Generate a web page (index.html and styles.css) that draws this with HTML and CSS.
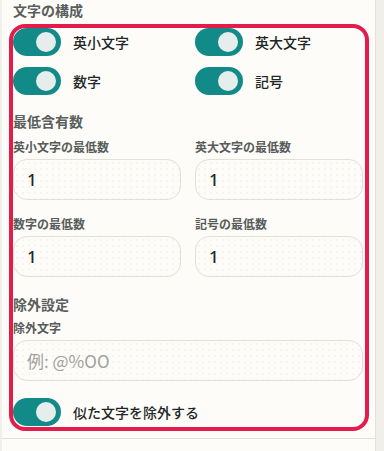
FILE: index.html
```html
<!DOCTYPE html>
<html lang="ja">
<head>
<meta charset="utf-8">
<link rel="stylesheet" href="styles.css">
</head>
<body>
<div class="panel">
  <section class="group">
    <h3 class="title">文字の構成</h3>
    <div class="box">
      <div class="grid toggles">
        <label class="toggle-row"><span class="switch"><span class="knob"></span></span><span class="tlabel">英小文字</span></label>
        <label class="toggle-row"><span class="switch"><span class="knob"></span></span><span class="tlabel">英大文字</span></label>
        <label class="toggle-row"><span class="switch"><span class="knob"></span></span><span class="tlabel">数字</span></label>
        <label class="toggle-row"><span class="switch"><span class="knob"></span></span><span class="tlabel">記号</span></label>
      </div>

      <h4 class="sub">最低含有数</h4>
      <div class="grid fields">
        <div class="field">
          <div class="flabel">英小文字の最低数</div>
          <div class="input"><span class="val">1</span></div>
        </div>
        <div class="field">
          <div class="flabel">英大文字の最低数</div>
          <div class="input"><span class="val">1</span></div>
        </div>
        <div class="field">
          <div class="flabel">数字の最低数</div>
          <div class="input"><span class="val">1</span></div>
        </div>
        <div class="field">
          <div class="flabel">記号の最低数</div>
          <div class="input"><span class="val">1</span></div>
        </div>
      </div>

      <h4 class="sub sub2">除外設定</h4>
      <div class="field single">
        <div class="flabel">除外文字</div>
        <div class="input"><span class="ph">例: @%OO</span></div>
      </div>

      <label class="toggle-row last"><span class="switch"><span class="knob"></span></span><span class="tlabel">似た文字を除外する</span></label>

      <div class="highlight"></div>
    </div>
  </section>
  <section class="group next">
    <h3 class="title">結果</h3>
  </section>
</div>
</body>
</html>
```

FILE: styles.css
```css
html, body {
  margin: 0;
  padding: 0;
  background: #f1efe9;
  height: 100%;
  overflow: hidden;
}
body {
  font-family: "Noto Sans CJK JP", "Noto Sans", sans-serif;
}
.panel {
  margin-left: 2px;
  width: 373px;
  background: #fdfcf8;
  border-right: 1px solid #e4e1d7;
  min-height: 100%;
}
.group {
  padding: 0 12px 12px 11px;
  border-bottom: 1px solid #e4e1d7;
}
.group.next {
  padding-top: 8px;
  border-bottom: none;
}
.title {
  margin: 0;
  font-size: 14px;
  line-height: 20px;
  font-weight: 700;
  color: #5a5f5e;
}
.box {
  position: relative;
  margin-top: 8px;
}
.grid {
  display: grid;
  grid-template-columns: 168px 168px;
  column-gap: 14px;
}
.toggles {
  row-gap: 11px;
}
.toggle-row {
  display: flex;
  align-items: center;
  gap: 12px;
  height: 28px;
}
.toggle-row.last {
  margin-top: 17px;
}
.switch {
  position: relative;
  width: 48px;
  height: 28px;
  border-radius: 14px;
  background: #118a88;
  flex: none;
}
.knob {
  position: absolute;
  right: 5px;
  top: 4px;
  width: 20px;
  height: 20px;
  border-radius: 50%;
  background: #e5eeec;
}
.tlabel {
  font-size: 14px;
  font-weight: 500;
  color: #222525;
  line-height: 20px;
}
.sub {
  margin: 16px 0 0;
  font-size: 14px;
  line-height: 20px;
  font-weight: 700;
  color: #5a5f5e;
}
.sub2 {
  margin-top: 17px;
}
.fields {
  margin-top: 7px;
  row-gap: 15px;
}
.field.single {
  margin-top: 5px;
}
.flabel {
  font-size: 12px;
  line-height: 18px;
  font-weight: 700;
  color: #575b5a;
  margin-bottom: 3px;
}
.input {
  box-sizing: border-box;
  height: 41px;
  border: 1px solid #e3e0d5;
  border-radius: 14px;
  background-color: #fdfcf8;
  background-image: radial-gradient(circle, #f3f1eb 0.6px, transparent 1px);
  background-size: 6px 6px;
  display: flex;
  align-items: center;
  padding-left: 13px;
}
.val {
  font-family: "Noto Sans", sans-serif;
  font-size: 17px;
  font-weight: 500;
  color: #1f2928;
}
.ph {
  font-size: 17px;
  color: #9fa19e;
}
.highlight {
  position: absolute;
  top: -4px;
  left: -4px;
  right: -6px;
  bottom: -5px;
  border: 4px solid #e31c4b;
  border-radius: 16px;
  pointer-events: none;
}
```
